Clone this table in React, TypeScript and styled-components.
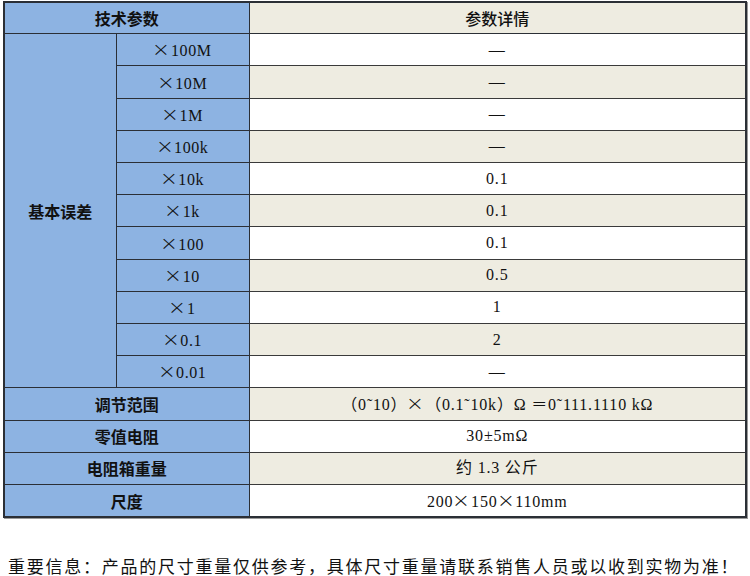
// 技术参数表：电阻箱各量程的基本误差与外形参数
import { Fragment } from 'react';
import styled, { createGlobalStyle } from 'styled-components';

type Row = { label: string; value: string };

const errorRows: Row[] = [
  { label: '×100M', value: '—' },
  { label: '×10M', value: '—' },
  { label: '×1M', value: '—' },
  { label: '×100k', value: '—' },
  { label: '×10k', value: '0.1' },
  { label: '×1k', value: '0.1' },
  { label: '×100', value: '0.1' },
  { label: '×10', value: '0.5' },
  { label: '×1', value: '1' },
  { label: '×0.1', value: '2' },
  { label: '×0.01', value: '—' },
];

const specRows: Row[] = [
  { label: '调节范围', value: '（0˜10）×（0.1˜10k）Ω ＝0˜111.1110 kΩ' },
  { label: '零值电阻', value: '30±5mΩ' },
  { label: '电阻箱重量', value: '约 1.3 公斤' },
  { label: '尺度', value: '200×150×110mm' },
];

// 原图里的“×”是全角宽度，这里单独包一层放大
const withTimes = (text: string) =>
  text.split('×').map((part, i) => (
    <Fragment key={i}>
      {i > 0 && <Times>×</Times>}
      {part}
    </Fragment>
  ));

export default function App() {
  return (
    <>
      <GlobalStyle />
      <Page>
        <Table>
          <colgroup>
            <col style={{ width: 112 }} />
            <col style={{ width: 133 }} />
            <col />
          </colgroup>
          <tbody>
            <tr>
              <HeadCell colSpan={2}>技术参数</HeadCell>
              <HeadCell $tone="beige" $plain>
                参数详情
              </HeadCell>
            </tr>
            {errorRows.map((row, i) => (
              <tr key={row.label}>
                {i === 0 && <LabelCell rowSpan={errorRows.length}>基本误差</LabelCell>}
                <RangeCell>{withTimes(row.label)}</RangeCell>
                <ValueCell $tone={i % 2 === 0 ? 'white' : 'beige'}>{row.value}</ValueCell>
              </tr>
            ))}
            {specRows.map((row, i) => (
              <tr key={row.label}>
                <LabelCell colSpan={2}>{row.label}</LabelCell>
                <ValueCell $tone={i % 2 === 0 ? 'beige' : 'white'}>{withTimes(row.value)}</ValueCell>
              </tr>
            ))}
          </tbody>
        </Table>
        <Notice>重要信息：产品的尺寸重量仅供参考，具体尺寸重量请联系销售人员或以收到实物为准！</Notice>
      </Page>
    </>
  );
}

// ─── Styled Components ───────────────────────────────────────────

const GlobalStyle = createGlobalStyle`
  html, body {
    margin: 0;
    padding: 0;
    background: #ffffff;
  }
`;

const Page = styled.div`
  width: 750px;
  height: 576px;
  padding: 1px 0 0 3px;
  box-sizing: border-box;
  display: flex;
  flex-direction: column;
  align-items: flex-start;
`;

const Table = styled.table`
  width: 744px;
  border-collapse: collapse;
  table-layout: fixed;
  border: 2px solid #2b2f36;
  box-shadow: 1px 1px 0 #9a9a9a;
`;

const cellBase = `
  height: 31.2px;
  padding: 0;
  text-align: center;
  vertical-align: middle;
  border: 1px solid #2b2f36;
  color: #111111;
  line-height: 1;
`;

const HeadCell = styled.td<{ $tone?: 'blue' | 'beige'; $plain?: boolean }>`
  ${cellBase}
  height: 30.3px;
  background: ${(p) => (p.$tone === 'beige' ? '#eeece1' : '#8db3e2')};
  font-family: 'Noto Sans CJK SC', sans-serif;
  font-size: 16px;
  font-weight: ${(p) => (p.$plain ? 500 : 700)};
`;

const LabelCell = styled.td`
  ${cellBase}
  background: #8db3e2;
  font-family: 'Noto Sans CJK SC', sans-serif;
  font-size: 16px;
  font-weight: 700;
`;

const RangeCell = styled.td`
  ${cellBase}
  background: #8db3e2;
  font-family: 'Liberation Serif', 'Noto Sans CJK SC', serif;
  font-size: 16px;
  letter-spacing: 0.6px;
`;

const ValueCell = styled.td<{ $tone: 'white' | 'beige' }>`
  ${cellBase}
  border-color: #3a3a3a #2b2f36 #3a3a3a #2b2f36;
  background: ${(p) => (p.$tone === 'beige' ? '#eeece1' : '#ffffff')};
  font-family: 'Liberation Serif', 'Noto Sans CJK SC', serif;
  font-size: 16px;
  letter-spacing: 0.8px;
`;

const Times = styled.span`
  display: inline-block;
  font-family: 'DejaVu Sans', sans-serif;
  font-size: 19px;
  font-weight: 300;
  line-height: 1;
  margin: 0 1px 0 0;
  transform: scaleX(1.15);
`;

const Notice = styled.p`
  margin: 37px 0 0 5px;
  font-family: 'Noto Sans CJK SC', sans-serif;
  font-size: 17px;
  line-height: 22px;
  font-weight: 400;
  letter-spacing: 1.75px;
  color: #111111;
  white-space: nowrap;
`;
